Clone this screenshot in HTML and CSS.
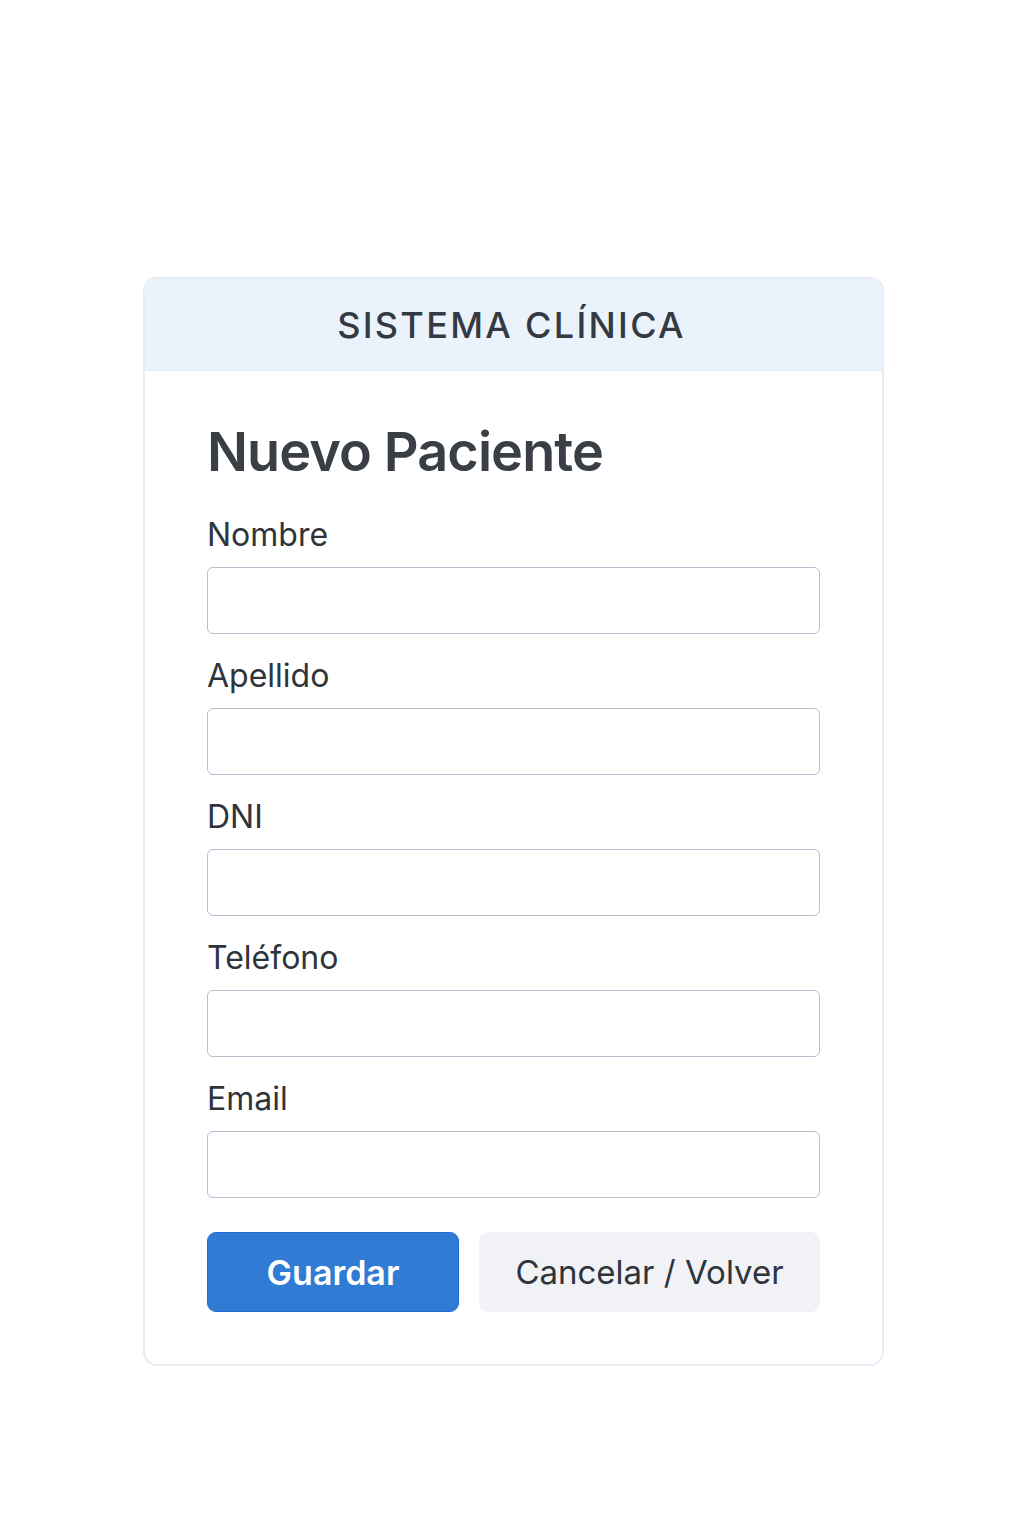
FILE: index.html
```html
<!DOCTYPE html>
<html lang="es">
<head>
<meta charset="utf-8">
<title>Nuevo Paciente</title>
<link rel="stylesheet" href="styles.css">
</head>
<body>
<main class="page">
  <section class="card">
    <header class="card-header">SISTEMA CLÍNICA</header>
    <form class="card-body">
      <h1 class="title">Nuevo Paciente</h1>
      <div class="field">
        <label class="label" for="nombre">Nombre</label>
        <input class="input" id="nombre" type="text">
      </div>
      <div class="field">
        <label class="label" for="apellido">Apellido</label>
        <input class="input" id="apellido" type="text">
      </div>
      <div class="field">
        <label class="label" for="dni">DNI</label>
        <input class="input" id="dni" type="text">
      </div>
      <div class="field">
        <label class="label" for="telefono">Teléfono</label>
        <input class="input" id="telefono" type="text">
      </div>
      <div class="field">
        <label class="label" for="email">Email</label>
        <input class="input" id="email" type="email">
      </div>
      <div class="actions">
        <button class="btn btn-primary" type="button">Guardar</button>
        <button class="btn btn-secondary" type="button">Cancelar / Volver</button>
      </div>
    </form>
  </section>
</main>
</body>
</html>
```
FILE: styles.css
```css
html, body {
  margin: 0;
  padding: 0;
  background: #ffffff;
}
body {
  font-family: Inter, "Noto Sans", "Liberation Sans", sans-serif;
  color: #3a3f46;
}
.page {
  padding-top: 277px;
  padding-left: 143px;
}
.card {
  width: 737px;
  border: 2px solid #e6edf5;
  border-radius: 14px;
  overflow: hidden;
  background: #fff;
}
.card-header {
  background: #eaf2fb;
  height: 91px;
  display: flex;
  align-items: center;
  justify-content: center;
  font-size: 36px;
  letter-spacing: 2.3px;
  font-weight: 500;
  color: #343a42;
  border-bottom: 1px solid #e3ebf5;
  padding-right: 4px;
}
.card-body {
  padding: 46px 62px 52px 62px;
  display: flex;
  flex-direction: column;
}
.title {
  margin: 0 0 28px 0;
  font-size: 54px;
  line-height: 70px;
  font-weight: 600;
  letter-spacing: -0.9px;
  color: #3a3f46;
}
.field {
  display: flex;
  flex-direction: column;
  margin-bottom: 22px;
}
.label {
  font-size: 32px;
  line-height: 40px;
  color: #2f343b;
  margin-bottom: 12px;
}
.input {
  height: 67px;
  box-sizing: border-box;
  border: 1.5px solid #b5c0d1;
  border-radius: 6px;
  background: #fff;
  margin: 0;
}
.actions {
  display: flex;
  gap: 20px;
  margin-top: 12px;
}
.btn {
  height: 80px;
  border-radius: 9px;
  font-family: inherit;
  font-size: 34px;
  padding: 0;
  cursor: pointer;
}
.btn-primary {
  width: 252px;
  background: #317bd5;
  border: 1.5px solid #1f6ad0;
  color: #fff;
  font-weight: 600;
}
.btn-secondary {
  width: 341px;
  background: #f0f2f5;
  border: none;
  color: #2f343b;
  font-size: 33px;
}
```
